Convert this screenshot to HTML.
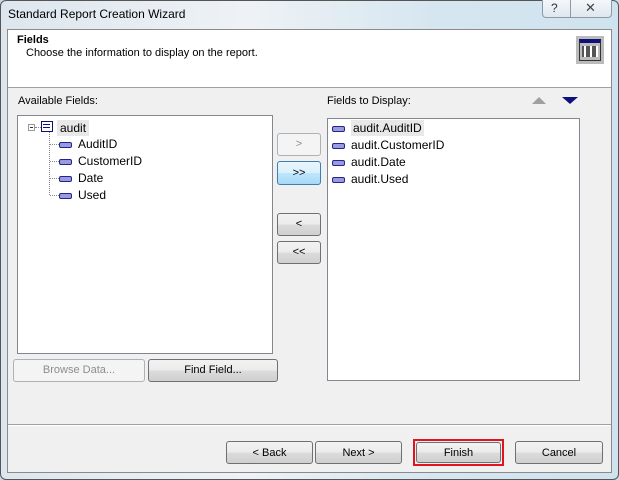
<!DOCTYPE html>
<html><head><style>
*{box-sizing:border-box;margin:0;padding:0}
body{width:619px;height:480px;overflow:hidden;background:#c9dbe8;font-family:"Liberation Sans",sans-serif;font-size:11px;color:#000;position:relative}
.abs{position:absolute}
.frame{left:0;top:0;width:619px;height:480px;background:linear-gradient(90deg,#dde6ee,#eef2f6 40%,#d6e6f0 70%,#cfe3ee);border:1px solid #555;border-radius:6px}
.title{left:8px;top:7px;font-size:12px;color:#000}
.client{left:7px;top:29px;width:605px;height:444px;background:#f0f0f0;border:1px solid #8a8a8a}
.header{left:8px;top:30px;width:603px;height:58px;background:#fff;border-bottom:1px solid #a0a0a0}
.box{background:#fff;border:1px solid #828790}
.btn{border:1px solid #707070;border-radius:3px;background:linear-gradient(#f2f2f2,#ebebeb 50%,#dcdcdc 50%,#cfcfcf);text-align:center;font-size:11px}
.dis{border-color:#adb2b5;background:#f4f4f4;color:#8d8d8d}
.hot{border-color:#3c7fb1;background:linear-gradient(#eaf6fd,#d9f0fc 50%,#bee6fd 50%,#a7d9f5)}
.fi{display:inline-block;width:13px;height:6px;border:1px solid #23238a;background:#9a9ae0;vertical-align:middle;margin-right:6px;border-radius:2px}
.row{position:absolute;font-size:12px;white-space:nowrap}
</style></head><body>
<div class="abs frame"></div>
<div class="abs title">Standard Report Creation Wizard</div>
<div class="abs" style="left:542px;top:0;width:70px;height:18px;border:1px solid #8a9aa8;border-top:none;border-radius:0 0 4px 4px;background:linear-gradient(#f4f7fa,#dfe7ee)"></div>
<div class="abs" style="left:570px;top:0;width:1px;height:17px;background:#8a9aa8"></div>
<div class="abs" style="left:551px;top:1px;font-size:12px;color:#333">?</div>
<div class="abs" style="left:585px;top:0px;font-size:13px;color:#444">✕</div>
<div class="abs client"></div>
<div class="abs header"></div>
<div class="abs" style="left:17px;top:34px;font-weight:bold;font-size:11px">Fields</div>
<div class="abs" style="left:26px;top:47px;font-size:11px">Choose the information to display on the report.</div>
<div class="abs" style="left:576px;top:36px;width:28px;height:28px;background:#bbb;padding:3px"><div style="width:22px;height:22px;background:#fff;border:1px solid #333;border-top:4px solid #10107a;background-image:repeating-linear-gradient(90deg,#555 0 4px,#fff 4px 6px),repeating-linear-gradient(0deg,#fff 0 1px,transparent 1px 4px);background-clip:content-box;padding:3px 2px"></div></div>
<div class="abs" style="left:18px;top:95px">Available Fields:</div>
<div class="abs" style="left:327px;top:95px">Fields to Display:</div>
<div class="abs" style="left:532px;top:97px;width:0;height:0;border-left:7px solid transparent;border-right:7px solid transparent;border-bottom:7px solid #a0a0a0"></div>
<div class="abs" style="left:562px;top:97px;width:0;height:0;border-left:8px solid transparent;border-right:8px solid transparent;border-top:7px solid #10107a"></div>
<div class="abs box" style="left:17px;top:115px;width:256px;height:239px"></div>
<div class="abs" style="left:28px;top:124px;width:7px;height:7px;border:1px solid #999;background:#fff"></div>
<div class="abs" style="left:30px;top:127px;width:3px;height:1px;background:#333"></div>
<div class="abs" style="left:35px;top:127px;width:6px;border-top:1px dotted #888"></div>
<div class="abs" style="left:49px;top:132px;height:63px;border-left:1px dotted #888"></div>
<div class="abs" style="left:41px;top:121px;width:12px;height:11px;border:1px solid #10107a;background:#fff"></div>
<div class="abs" style="left:43px;top:124px;width:7px;height:4px;border-top:1px solid #10107a;border-bottom:1px solid #10107a"></div>
<div class="abs" style="left:57px;top:120px;background:#e8e8e8;padding:1px 3px;font-size:12px">audit</div>
<div class="row" style="left:50px;top:137px"><span style="display:inline-block;width:9px;border-top:1px dotted #888;vertical-align:middle"></span><span class="fi"></span>AuditID</div>
<div class="row" style="left:50px;top:154px"><span style="display:inline-block;width:9px;border-top:1px dotted #888;vertical-align:middle"></span><span class="fi"></span>CustomerID</div>
<div class="row" style="left:50px;top:171px"><span style="display:inline-block;width:9px;border-top:1px dotted #888;vertical-align:middle"></span><span class="fi"></span>Date</div>
<div class="row" style="left:50px;top:188px"><span style="display:inline-block;width:9px;border-top:1px dotted #888;vertical-align:middle"></span><span class="fi"></span>Used</div>
<div class="abs box" style="left:327px;top:118px;width:253px;height:263px"></div>
<div class="row" style="left:332px;top:121px"><span class="fi"></span><span style="background:#e8e8e8;padding:1px 2px">audit.AuditID</span></div>
<div class="row" style="left:332px;top:138px"><span class="fi"></span>audit.CustomerID</div>
<div class="row" style="left:332px;top:155px"><span class="fi"></span>audit.Date</div>
<div class="row" style="left:332px;top:172px"><span class="fi"></span>audit.Used</div>
<div class="abs btn dis" style="left:277px;top:133px;width:44px;height:23px;line-height:21px">&gt;</div>
<div class="abs btn hot" style="left:277px;top:161px;width:44px;height:24px;line-height:22px">&gt;&gt;</div>
<div class="abs btn" style="left:277px;top:213px;width:44px;height:23px;line-height:21px">&lt;</div>
<div class="abs btn" style="left:277px;top:241px;width:44px;height:23px;line-height:21px">&lt;&lt;</div>
<div class="abs btn dis" style="left:13px;top:359px;width:132px;height:23px;line-height:21px">Browse Data...</div>
<div class="abs btn" style="left:148px;top:359px;width:130px;height:23px;line-height:21px">Find Field...</div>
<div class="abs" style="left:8px;top:424px;width:603px;height:2px;border-top:1px solid #a0a0a0;border-bottom:1px solid #fff"></div>
<div class="abs btn" style="left:226px;top:441px;width:87px;height:23px;line-height:22px">&lt; Back</div>
<div class="abs btn" style="left:315px;top:441px;width:87px;height:23px;line-height:22px">Next &gt;</div>
<div class="abs" style="left:413px;top:439px;width:91px;height:27px;border:2px solid #e0141e"></div>
<div class="abs btn" style="left:416px;top:442px;width:85px;height:21px;line-height:20px">Finish</div>
<div class="abs btn" style="left:515px;top:441px;width:88px;height:23px;line-height:22px">Cancel</div>
</body></html>
